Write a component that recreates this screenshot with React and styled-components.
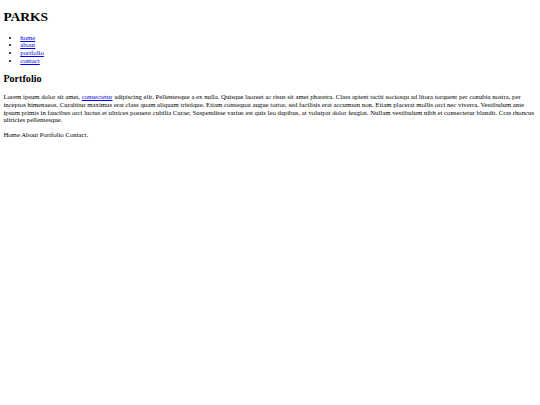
import React from "react";
import styled, { createGlobalStyle } from "styled-components";

// The reference is a 1280px-wide default-styled page scaled to 540px.
const S = 540 / 1280;
const px = (v) => `${v * S}px`;

const Global = createGlobalStyle`
  html, body { background: #fff; }
  body {
    margin: 0 ${px(8)} ${px(8)};
    font-family: "Liberation Serif", "Times New Roman", serif;
    font-size: ${px(16)};
    line-height: ${px(18.4)};
    color: #000;
  }
`;

const Header = styled.header``;

const Title = styled.h1`
  font-size: ${px(32)};
  line-height: ${px(36.8)};
  font-weight: bold;
  margin: ${px(21.44)} 0;
`;

const NavList = styled.ul`
  margin: ${px(16)} 0;
  padding-left: ${px(40)};
  list-style: disc;
`;

const NavItem = styled.li`
  line-height: ${px(18.4)};
`;

const Link = styled.a`
  color: #0000ee;
  text-decoration: underline;
`;

const Main = styled.main``;

const SectionTitle = styled.h2`
  font-size: ${px(24)};
  line-height: ${px(27.6)};
  font-weight: bold;
  margin: ${px(19.92)} 0;
`;

const Paragraph = styled.p`
  margin: ${px(16)} 0;
  line-height: ${px(18.4)};
`;

const Footer = styled.footer``;

const navItems = ["home", "about", "portfolio", "contact"];

export default function App() {
  return (
    <>
      <Global />
      <Header>
        <Title>PARKS</Title>
        <nav>
          <NavList>
            {navItems.map((item) => (
              <NavItem key={item}>
                <Link href="#">{item}</Link>
              </NavItem>
            ))}
          </NavList>
        </nav>
      </Header>
      <Main>
        <SectionTitle>Portfolio</SectionTitle>
        <Paragraph>
          Lorem ipsum dolor sit amet, <Link href="#">consectetur</Link> adipiscing elit.
          Pellentesque a ex nulla. Quisque laoreet ac risus sit amet pharetra. Class aptent
          taciti sociosqu ad litora torquent per conubia nostra, per inceptos himenaeos.
          Curabitur maximus erat class quam aliquam tristique. Etiam consequat augue tortor,
          sed facilisis erat accumsan non. Etiam placerat mollis orci nec viverra. Vestibulum
          ante ipsum primis in faucibus orci luctus et ultrices posuere cubilia Curae;
          Suspendisse varius est quis leo dapibus, at volutpat dolor feugiat. Nullam vestibulum
          nibh et consectetur blandit. Cras rhoncus ultricies pellentesque.
        </Paragraph>
      </Main>
      <Footer>
        <Paragraph>Home About Portfolio Contact.</Paragraph>
      </Footer>
    </>
  );
}
